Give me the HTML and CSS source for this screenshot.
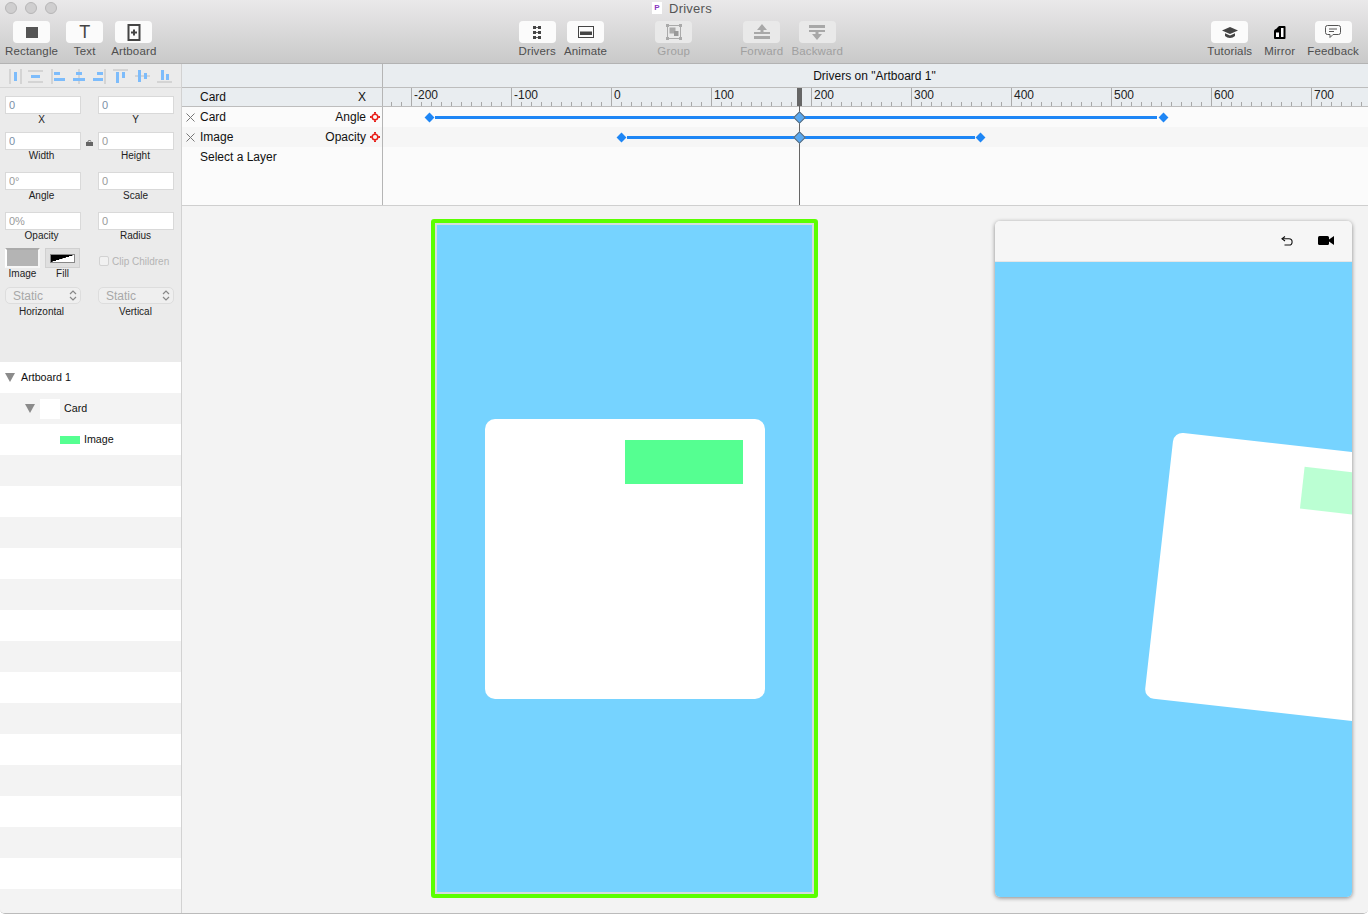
FILE: index.html
```html
<!DOCTYPE html>
<html lang="en">
<head>
    <meta charset="UTF-8">
    <title>Drivers</title>
    <link rel="stylesheet" href="styles.css">
</head>
<body>
<div class="window">
    <header class="toolbar">
        <div class="titlebar">
            <div class="lights"><span></span><span></span><span></span></div>
            <span class="doc-icon">P</span>
            <span class="doc-title">Drivers</span>
        </div>
        <div class="tools">
            <div class="tool-group">
                <div class="tool">
                    <span class="tool-btn"><span class="square-icon"></span></span>
                    <span class="tool-name">Rectangle</span>
                </div>
                <div class="tool">
                    <span class="tool-btn"><span class="text-icon">T</span></span>
                    <span class="tool-name">Text</span>
                </div>
                <div class="tool">
                    <span class="tool-btn">
                        <svg width="14" height="17" viewBox="0 0 14 17"><rect x="1.500" y="1" width="11" height="15" fill="none" stroke="#444" stroke-width="2"/><path d="M7 5.500v6M4 8.500h6" stroke="#444" stroke-width="2"/></svg>
                    </span>
                    <span class="tool-name">Artboard</span>
                </div>
            </div>
            <div class="tool-group group-center">
                <div class="tool">
                    <span class="tool-btn">
                        <svg width="10" height="14" viewBox="0 0 10 14" fill="#444"><rect x="1" y="1" width="3" height="3"/><rect x="6" y="1" width="3" height="3"/><rect x="1" y="6" width="3" height="3"/><rect x="6" y="6" width="3" height="3"/><rect x="1" y="11" width="3" height="3"/><rect x="6" y="11" width="3" height="3"/><path d="M4 2.500h2M4 7.500h2M4 12.500h2" stroke="#666"/></svg>
                    </span>
                    <span class="tool-name">Drivers</span>
                </div>
                <div class="tool">
                    <span class="tool-btn">
                        <svg width="16" height="12" viewBox="0 0 16 12"><rect x="0.500" y="0.500" width="15" height="11" fill="none" stroke="#444"/><rect x="2" y="5.500" width="12" height="3.500" fill="#444"/></svg>
                    </span>
                    <span class="tool-name">Animate</span>
                </div>
                <div class="tool tool-off tool-far">
                    <span class="tool-btn">
                        <svg width="16" height="16" viewBox="0 0 16 16" fill="#aaa"><rect x="1.500" y="1.500" width="13" height="13" fill="none" stroke="#aaa"/><rect width="3" height="3"/><rect x="13" width="3" height="3"/><rect y="13" width="3" height="3"/><rect x="13" y="13" width="3" height="3"/><rect x="3.500" y="3.500" width="6" height="6"/><rect x="8" y="7" width="4.500" height="5" fill="#999"/></svg>
                    </span>
                    <span class="tool-name">Group</span>
                </div>
                <div class="tool tool-off tool-far">
                    <span class="tool-btn">
                        <svg width="16" height="16" viewBox="0 0 16 16" fill="#a8a8a8"><path d="M8 0l5 6h-3.500v2H16v2H0V8h6.500V6H3z"/><rect y="12" width="16" height="3"/></svg>
                    </span>
                    <span class="tool-name">Forward</span>
                </div>
                <div class="tool tool-off">
                    <span class="tool-btn">
                        <svg width="16" height="16" viewBox="0 0 16 16" fill="#a8a8a8"><rect y="1" width="16" height="3"/><path d="M0 6h16v2H9.500v2H13l-5 6-5-6h3.500V8H0z"/></svg>
                    </span>
                    <span class="tool-name">Backward</span>
                </div>
            </div>
            <div class="tool-group group-right">
                <div class="tool tool-tutorials">
                    <span class="tool-btn">
                        <svg width="16" height="11" viewBox="0 0 16 11" fill="#444"><path d="M8 0l8 3.500-8 3.500-8-3.500z"/><path d="M3 6.300l5 2.200 5-2.200v2.700c-1.500 1.300-3 2-5 2s-3.500-.7-5-2z"/></svg>
                    </span>
                    <span class="tool-name">Tutorials</span>
                </div>
                <div class="tool">
                    <span class="tool-btn tool-btn-plain">
                        <svg width="12" height="13" viewBox="0 0 12 13"><path d="M5 0h5.500a1 1 0 0 1 1 1v11a1 1 0 0 1-1 1H1a1 1 0 0 1-1-1V5.500C0 4 1 3.300 2 3z" fill="#000"/><path d="M7 2h2.500v9H7zM2 6.500h3V11H2z" fill="#fff"/></svg>
                    </span>
                    <span class="tool-name">Mirror</span>
                </div>
                <div class="tool tool-end">
                    <span class="tool-btn">
                        <svg width="16" height="14" viewBox="0 0 16 14" fill="none" stroke="#555"><path d="M2.500.500h11a2 2 0 0 1 2 2v5a2 2 0 0 1-2 2H8l-3 3v-3H2.500a2 2 0 0 1-2-2v-5a2 2 0 0 1 2-2z"/><path d="M4 4h8M4 6.500h5"/></svg>
                    </span>
                    <span class="tool-name">Feedback</span>
                </div>
            </div>
        </div>
    </header>

    <div class="workspace">
        <aside class="sidebar">
            <svg class="align-icons" width="181" height="23" viewBox="0 64 181 23">
                <g fill="#d4d4d4">
                    <rect x="9" y="69" width="2" height="15"/><rect x="20" y="69" width="2" height="15"/>
                    <rect x="28" y="70" width="15" height="2"/><rect x="28" y="81" width="15" height="2"/>
                    <rect x="51" y="69" width="2" height="15"/>
                    <rect x="78" y="69" width="2" height="15"/>
                    <rect x="104" y="69" width="2" height="15"/>
                    <rect x="113" y="69" width="15" height="2"/>
                    <rect x="135" y="75" width="15" height="2"/>
                    <rect x="157" y="81" width="15" height="2"/>
                </g>
                <g fill="#7dbcfb">
                    <rect x="14" y="72" width="3" height="9"/>
                    <rect x="31" y="75" width="9" height="3"/>
                    <rect x="54" y="72" width="6" height="3"/><rect x="54" y="78" width="11" height="3"/>
                    <rect x="76" y="72" width="6" height="3"/><rect x="73" y="78" width="12" height="3"/>
                    <rect x="97" y="72" width="6" height="3"/><rect x="93" y="78" width="10" height="3"/>
                    <rect x="116" y="72" width="3" height="11"/><rect x="122" y="72" width="3" height="6"/>
                    <rect x="138" y="70" width="3" height="12"/><rect x="144" y="73" width="3" height="6"/>
                    <rect x="161" y="70" width="3" height="10"/><rect x="166" y="74" width="3" height="6"/>
                </g>
            </svg>

            <div class="props">
                <div class="props-row first">
                    <div class="prop"><input class="num num-set" value="0" readonly><label>X</label></div>
                    <div class="prop"><input class="num num-set" value="0" readonly><label>Y</label></div>
                </div>
                <div class="props-row">
                    <div class="prop"><input class="num num-set" value="0" readonly><label>Width</label></div>
                    <div class="prop"><input class="num" value="0" readonly><label>Height</label>
                        <svg class="lock" width="8" height="6" viewBox="0 0 8 6"><rect y="2" width="7" height="4" fill="#666"/><path d="M2 2.500V1.500C2 .7 2.700.500 3.500.500S5 .7 5 1.500" fill="none" stroke="#666"/></svg>
                    </div>
                </div>
                <div class="props-row">
                    <div class="prop"><input class="num" value="0°" readonly><label>Angle</label></div>
                    <div class="prop"><input class="num" value="0" readonly><label>Scale</label></div>
                </div>
                <div class="props-row">
                    <div class="prop"><input class="num" value="0%" readonly><label>Opacity</label></div>
                    <div class="prop"><input class="num" value="0" readonly><label>Radius</label></div>
                </div>
                <div class="props-row swatch-row">
                    <div class="swatches">
                        <div class="swatch-item">
                            <span class="swatch swatch-image"></span>
                            <label>Image</label>
                        </div>
                        <div class="swatch-item">
                            <span class="swatch swatch-fill"><span class="fill-ramp"></span></span>
                            <label>Fill</label>
                        </div>
                    </div>
                    <div class="clip"><span class="clip-box"></span><span>Clip Children</span></div>
                </div>
                <div class="props-row">
                    <div class="prop">
                        <div class="stepper">Static
                            <svg width="8" height="11" viewBox="0 0 8 11" fill="none" stroke="#888" stroke-width="1.200"><path d="M1 4l3-3 3 3M1 7l3 3 3-3"/></svg>
                        </div>
                        <label>Horizontal</label>
                    </div>
                    <div class="prop">
                        <div class="stepper">Static
                            <svg width="8" height="11" viewBox="0 0 8 11" fill="none" stroke="#888" stroke-width="1.200"><path d="M1 4l3-3 3 3M1 7l3 3 3-3"/></svg>
                        </div>
                        <label>Vertical</label>
                    </div>
                </div>
            </div>

            <ul class="layers">
                <li class="layer layer-top"><span class="twisty"></span>Artboard 1</li>
                <li class="layer layer-card"><span class="twisty"></span><span class="thumb-card"></span>Card</li>
                <li class="layer layer-image"><span class="thumb-image"></span>Image</li>
                <li class="layer"></li><li class="layer"></li><li class="layer"></li><li class="layer"></li><li class="layer"></li>
                <li class="layer"></li><li class="layer"></li><li class="layer"></li><li class="layer"></li><li class="layer"></li>
                <li class="layer"></li><li class="layer"></li><li class="layer"></li><li class="layer"></li><li class="layer"></li>
            </ul>
        </aside>

        <main class="main">
            <section class="drivers">
                <div class="drivers-title">
                    <div class="cell-left"></div>
                    <div class="cell-right">Drivers on "Artboard 1"</div>
                </div>
                <div class="drivers-head">
                    <div class="cell-left"><span>Card</span><span>X</span></div>
                    <div class="ruler">
                        <span>-200</span><span>-100</span><span>0</span><span>100</span><span>200</span>
                        <span>300</span><span>400</span><span>500</span><span>600</span><span>700</span>
                    </div>
                </div>
                <div class="driver-row">
                    <div class="cell-left">
                        <svg class="remove" width="9" height="9" viewBox="0 0 9 9"><path d="M.5.5l8 8M8.500.5l-8 8" stroke="#777" fill="none"/></svg>
                        <span class="driver-name">Card</span>
                        <span class="driver-prop">Angle</span>
                        <svg class="target" width="10" height="10" viewBox="0 0 10 10" fill="none" stroke="#e8201a"><circle cx="5" cy="5" r="2.800" stroke-width="1.500"/><path d="M5 0v1.800M5 8.200V10M0 5h1.800M8.200 5H10" stroke-width="2"/></svg>
                    </div>
                    <div class="track">
                        <span class="bar" style="left:52px;width:722px"></span>
                        <span class="key" style="left:43px"></span>
                        <span class="key" style="left:777px"></span>
                        <span class="key-now"></span>
                    </div>
                </div>
                <div class="driver-row row-alt">
                    <div class="cell-left">
                        <svg class="remove" width="9" height="9" viewBox="0 0 9 9"><path d="M.5.5l8 8M8.500.5l-8 8" stroke="#777" fill="none"/></svg>
                        <span class="driver-name">Image</span>
                        <span class="driver-prop">Opacity</span>
                        <svg class="target" width="10" height="10" viewBox="0 0 10 10" fill="none" stroke="#e8201a"><circle cx="5" cy="5" r="2.800" stroke-width="1.500"/><path d="M5 0v1.800M5 8.200V10M0 5h1.800M8.200 5H10" stroke-width="2"/></svg>
                    </div>
                    <div class="track">
                        <span class="bar" style="left:244px;width:348px"></span>
                        <span class="key" style="left:235px"></span>
                        <span class="key" style="left:594px"></span>
                        <span class="key-now"></span>
                    </div>
                </div>
                <div class="driver-row row-hint">
                    <div class="cell-left"><span class="driver-name">Select a Layer</span></div>
                    <div class="track"></div>
                </div>
                <div class="playhead"><span class="playhead-grip"></span><span class="playhead-line"></span></div>
            </section>

            <section class="canvas">
                <div class="artboard">
                    <div class="artboard-fill">
                        <div class="card"><div class="card-image"></div></div>
                    </div>
                </div>
                <div class="mirror">
                    <div class="mirror-bar">
                        <svg width="12" height="10" viewBox="0 0 12 10" fill="none" stroke="#111" stroke-width="1.100"><path d="M4 .5L1 2.800 4 5"/><path d="M1 2.800h7a3 3 0 0 1 0 6.200H3.500"/></svg>
                        <svg width="16" height="9" viewBox="0 0 16 9" fill="#000"><rect width="11" height="9" rx="1.500"/><path d="M11 3.500L16 0v9l-5-3.500z"/></svg>
                    </div>
                    <div class="mirror-screen">
                        <div class="mirror-card"><div class="mirror-card-image"></div></div>
                    </div>
                </div>
            </section>
        </main>
    </div>
</div>
</body>
</html>
```

FILE: styles.css
```css
/* Reset */
* {
    margin: 0;
    padding: 0;
    box-sizing: border-box;
}

html, body {
    width: 1368px;
    height: 914px;
    overflow: hidden;
    background-color: #fff;
}

body {
    font-family: "Liberation Sans", Arial, sans-serif;
    color: #111;
}

.window {
    display: flex;
    flex-direction: column;
    height: 914px;
    overflow: hidden;
    border-radius: 0 0 5px 5px;
    border-bottom: 1px solid #bbb;
}

/* Toolbar */
.toolbar {
    height: 64px;
    flex: none;
    background: linear-gradient(#eae9ea, #c9c9c9);
    border-bottom: 1px solid #b3b3b3;
}

.titlebar {
    display: flex;
    align-items: center;
    height: 16px;
    padding-left: 5px;
}

.lights {
    display: flex;
    gap: 8px;
}

    .lights span {
        width: 12px;
        height: 12px;
        border-radius: 50%;
        background-color: #cfcecf;
        border: 1px solid #b7b6b7;
    }

.doc-icon {
    width: 10px;
    height: 12px;
    margin-left: 595px;
    background-color: #fff;
    color: #8a35c0;
    font-size: 8px;
    font-weight: 700;
    line-height: 11px;
    text-align: center;
}

.doc-title {
    margin-left: 7px;
    font-size: 13px;
    letter-spacing: 0.25px;
    color: #555;
}

.tools {
    display: flex;
    padding: 5px 9px 0 5px;
}

.tool-group {
    display: flex;
    gap: 8px;
}

.group-center {
    margin-left: 362px;
}

.group-right {
    margin-left: auto;
}

.tool {
    display: flex;
    flex-direction: column;
    align-items: center;
}

.tool-far {
    margin-left: 40px;
}

.tool-tutorials {
    margin-right: 1px;
}

.tool-end {
    margin-left: 1px;
}

.tool-btn {
    display: flex;
    align-items: center;
    justify-content: center;
    width: 37px;
    height: 22px;
    background-color: #fbfbfb;
    border-radius: 4px;
}

.tool-btn-plain {
    background: none;
}

.tool-name {
    margin-top: 1px;
    font-size: 11.500px;
    letter-spacing: 0.15px;
    line-height: 14px;
    color: #4e4e4e;
    white-space: nowrap;
}

.tool-off .tool-btn {
    background-color: #e9e9e9;
}

.tool-off .tool-name {
    color: #a0a0a0;
}

.square-icon {
    width: 12px;
    height: 11px;
    background-color: #555;
}

.text-icon {
    font-size: 18px;
    line-height: 22px;
    color: #444;
}

/* Layout */
.workspace {
    flex: 1;
    display: flex;
    min-height: 0;
}

.sidebar {
    width: 182px;
    flex: none;
    background-color: #ebebeb;
    border-right: 1px solid #d2d2d2;
    overflow: hidden;
}

.align-icons {
    display: block;
}

/* Properties */
.props {
    height: 275px;
    padding: 8px 0 0 5px;
    border-top: 1px solid #d6d6d6;
}

.props-row {
    display: grid;
    grid-template-columns: 76px 76px;
    column-gap: 17px;
    margin-bottom: 10px;
}

    .props-row.first {
        margin-bottom: 6px;
    }

.prop {
    position: relative;
}

    .prop label,
    .swatch-item label {
        display: block;
        padding-right: 3px;
        font-size: 10px;
        line-height: 12px;
        text-align: center;
        color: #222;
    }

    .prop:last-child label {
        padding-right: 1px;
    }

.num {
    display: block;
    width: 76px;
    height: 18px;
    padding: 0 3px;
    background-color: #fff;
    border: 1px solid #d9d9d9;
    border-radius: 0;
    outline: none;
    font-family: "Liberation Sans", Arial, sans-serif;
    font-size: 11px;
    color: #9a9a9a;
}

.num-set {
    color: #7c8fa8;
}

.lock {
    position: absolute;
    left: -12px;
    top: 8px;
}

.swatch-row {
    margin-top: -4px;
    margin-bottom: 7px;
}

.swatches {
    display: flex;
    gap: 5px;
}

.swatch-item {
    width: 35px;
}

    .swatch-item label {
        padding-right: 0;
    }

.swatch {
    display: flex;
    align-items: center;
    justify-content: center;
    width: 35px;
    height: 20px;
}

.swatch-image {
    background-color: #b4b4b4;
    border: 2px solid #f6f6f6;
    border-top-color: #aaa;
    border-left-color: #fff;
}

.swatch-fill {
    background-color: #dfdfdf;
    border: 1px solid #d0d0d0;
}

.fill-ramp {
    width: 25px;
    height: 9px;
    border: 1px solid #888;
    background: linear-gradient(to bottom right, #000 49%, #fff 51%);
}

.clip {
    display: flex;
    align-items: center;
    gap: 3px;
    height: 18px;
    margin: 4px 0 0 1px;
    font-size: 10px;
    color: #b4b4b4;
    white-space: nowrap;
}

.clip-box {
    width: 10px;
    height: 10px;
    background-color: #f1f1f1;
    border: 1px solid #d2d2d2;
    border-radius: 2px;
}

.stepper {
    display: flex;
    align-items: center;
    justify-content: space-between;
    height: 17px;
    margin-bottom: 2px;
    padding: 0 3px 0 7px;
    background-color: #efefef;
    border: 1px solid #ddd;
    border-radius: 5px;
    font-size: 12px;
    color: #a8a8a8;
}

/* Layer list */
.layers {
    list-style: none;
}

.layer {
    display: flex;
    align-items: center;
    height: 31px;
    padding-bottom: 2px;
    background-color: #fff;
    font-size: 10.700px;
    color: #111;
}

    .layer:nth-child(even) {
        background-color: #f3f3f3;
    }

.twisty {
    width: 0;
    height: 0;
    margin-top: 1px;
    border-left: 5px solid transparent;
    border-right: 5px solid transparent;
    border-top: 9px solid #8b8b8b;
}

.layer-top {
    padding-left: 5px;
}

    .layer-top .twisty {
        margin-right: 6px;
    }

.layer-card {
    padding-left: 25px;
}

    .layer-card .twisty {
        margin-right: 5px;
    }

.thumb-card {
    width: 20px;
    height: 20px;
    margin: 2px 4px 0 0;
    background-color: #fff;
}

.layer-image {
    padding-left: 60px;
}

.thumb-image {
    width: 20px;
    height: 8px;
    margin: 2px 4px 0 0;
    background-color: #55ff91;
}

/* Drivers panel */
.main {
    flex: 1;
    display: flex;
    flex-direction: column;
    min-width: 0;
}

.drivers {
    position: relative;
    height: 142px;
    flex: none;
    background-color: #fbfbfb;
    border-bottom: 1px solid #cfcfcf;
    font-size: 12px;
    overflow: hidden;
}

.cell-left {
    display: flex;
    align-items: center;
    width: 201px;
    flex: none;
    border-right: 1px solid #b5b5b5;
}

.drivers-title {
    display: flex;
    height: 24px;
    background-color: #e9edf0;
    border-bottom: 1px solid #bdbdbd;
}

.cell-right {
    flex: 1;
    padding-right: 2px;
    line-height: 24px;
    text-align: center;
}

.drivers-head {
    display: flex;
    height: 19px;
    background-color: #e9edf0;
    border-bottom: 1px solid #bdbdbd;
}

    .drivers-head .cell-left {
        justify-content: space-between;
        padding: 0 16px 0 18px;
    }

.ruler {
    flex: 1;
    display: flex;
    padding-left: 28px;
    overflow: hidden;
    background-image: linear-gradient(90deg, #a8a8a8 1px, transparent 1px);
    background-size: 10px 4px;
    background-position: 8px 100%;
    background-repeat: repeat-x;
}

    .ruler span {
        flex: none;
        width: 100px;
        padding-left: 2px;
        line-height: 15px;
        border-left: 1px solid #aaa;
        color: #222;
    }

.driver-row {
    display: flex;
    height: 20px;
}

    .driver-row .cell-left {
        padding-right: 2px;
    }

.row-alt {
    background-color: #f6f6f6;
}

.row-hint {
    height: 58px;
}

    .row-hint .cell-left {
        align-items: flex-start;
        padding: 3px 0 0 18px;
    }

.remove {
    margin-left: 4px;
    margin-right: 5px;
}

.driver-prop {
    margin-left: auto;
    margin-right: 4px;
}

.track {
    position: relative;
    flex: 1;
}

.bar {
    position: absolute;
    top: 9px;
    height: 3px;
    background-color: #1e86f5;
}

.key {
    position: absolute;
    top: 7px;
    width: 7px;
    height: 7px;
    background-color: #1e86f5;
    transform: rotate(45deg);
}

.key-now {
    position: absolute;
    z-index: 2;
    left: 412px;
    top: 6px;
    width: 9px;
    height: 9px;
    background-color: #5aa8ef;
    border: 1px solid #5f6a74;
    transform: rotate(45deg);
}

.playhead {
    position: absolute;
    left: 615px;
    top: 24px;
    bottom: 0;
    width: 5px;
}

.playhead-grip {
    display: block;
    width: 5px;
    height: 18px;
    background-color: #666;
}

.playhead-line {
    display: block;
    width: 1px;
    height: 99px;
    margin-left: 2px;
    background-color: #666;
}

/* Canvas */
.canvas {
    flex: 1;
    display: flex;
    align-items: flex-start;
    padding: 13px 0 0 249px;
    background-color: #f3f3f3;
    overflow: hidden;
}

.artboard {
    width: 387px;
    height: 679px;
    flex: none;
    border: 4px solid #5aff00;
    border-radius: 3px;
}

.artboard-fill {
    display: flex;
    align-items: center;
    justify-content: center;
    height: 100%;
    background-color: #76d3ff;
    border: 2px solid #d5dcdc;
}

.card {
    width: 280px;
    height: 280px;
    padding: 21px 0 0 140px;
    background-color: #fff;
    border-radius: 10px;
}

.card-image {
    width: 118px;
    height: 44px;
    background-color: #55ff91;
}

.mirror {
    display: flex;
    flex-direction: column;
    width: 357px;
    height: 676px;
    flex: none;
    margin: 2px 0 0 177px;
    border-radius: 5px;
    overflow: hidden;
    box-shadow: 0 1px 4px rgba(0, 0, 0, 0.45);
}

.mirror-bar {
    display: flex;
    align-items: center;
    justify-content: flex-end;
    gap: 25px;
    height: 41px;
    flex: none;
    padding: 0 18px 1px 0;
    background-color: #f6f6f6;
    border-bottom: 1px solid #e6e6e6;
}

.mirror-screen {
    position: relative;
    flex: 1;
    background-color: #76d3ff;
    overflow: hidden;
}

.mirror-card {
    position: absolute;
    left: 179px;
    top: 170px;
    width: 280px;
    height: 280px;
    padding: 21px 0 0 140px;
    background-color: #fff;
    border-radius: 10px;
    transform-origin: 0 0;
    transform: rotate(6.400deg) scale(0.955);
}

.mirror-card-image {
    width: 118px;
    height: 44px;
    background-color: #55ff91;
    opacity: 0.4;
}
```
